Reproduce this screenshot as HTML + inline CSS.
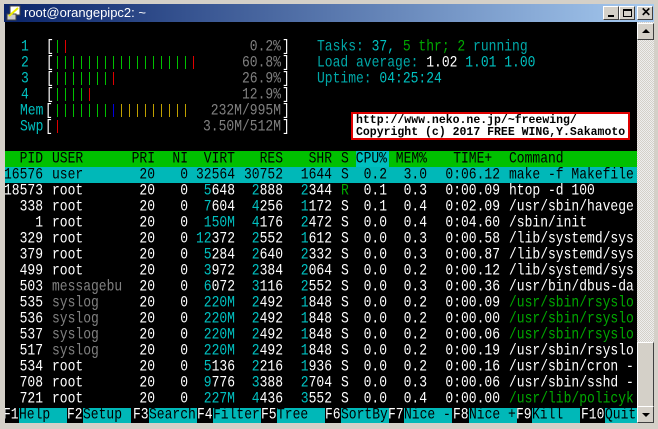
<!DOCTYPE html>
<html><head><meta charset="utf-8"><style>
*{margin:0;padding:0;box-sizing:border-box}
body{width:658px;height:429px;overflow:hidden;background:#d4d0c8;position:relative;font-family:"Liberation Mono",monospace}
#title{position:absolute;left:4px;top:4px;width:650px;height:18px;background:linear-gradient(to right,#0a246a,#a6caf0)}
#title .t{position:absolute;left:20px;top:1px;color:#fff;font:13px "Liberation Sans",sans-serif}
.tb{position:absolute;top:2px;width:16px;height:14px;background:#d4d0c8;border:1px solid;border-color:#fff #404040 #404040 #fff}
#term{position:absolute;left:5px;top:22px;width:632px;height:401px;background:#000;overflow:hidden}
.r{position:absolute;left:0;width:632px;height:16px}
.x{position:absolute;top:0;height:16px;line-height:16px;font-size:13px;white-space:pre;color:#fff;transform:scaleY(1.22);transform-origin:center}
.c{color:#00c0c0}.g{color:#00a800}.gr{color:#808080}.k{color:#000}.tl{color:#00a8a8}
.bar{position:absolute;width:1px;height:13px;top:1px}
.pct{left:180px;width:96px;text-align:right;color:#808080}
.pid{left:-5px;width:43px;text-align:right}.usr{left:47px}.pri{left:110px;width:40px;text-align:right}
.ni{left:155px;width:28px;text-align:right}.virt{left:185px;width:45px;text-align:right}
.res{left:235px;width:43px;text-align:right}.shr{left:285px;width:42px;text-align:right}
.s{left:336px}.cpu{left:345px;width:37px;text-align:right}.mem{left:385px;width:37px;text-align:right}
.time{left:425px;width:70px;text-align:right}.cmd{left:504px}
#sb{position:absolute;left:637px;top:22px;width:17px;height:401px;background-color:#eee;background-image:linear-gradient(45deg,#d4d0c8 25%,transparent 25%,transparent 75%,#d4d0c8 75%),linear-gradient(45deg,#d4d0c8 25%,transparent 25%,transparent 75%,#d4d0c8 75%);background-size:2px 2px;background-position:0 0,1px 1px}
.sbb{position:absolute;left:0;width:17px;height:17px;background:#d4d0c8;border:1px solid;border-color:#fff #404040 #404040 #fff}
#box{position:absolute;left:351px;top:112px;width:279px;height:28px;background:#fff;border:2px solid #e00000;font:bold 11.5px "Liberation Mono",monospace;color:#000;line-height:12px;padding:1px 0 0 3px;white-space:pre}
</style></head><body>
<div id="title">
<svg style="position:absolute;left:2px;top:1px" width="16" height="16" viewBox="0 0 16 16"><rect x="4" y="1" width="10" height="9" fill="#fff" stroke="#444"/><rect x="1" y="9" width="9" height="6" fill="#ccc" stroke="#444"/><path d="M3 11 L12 3" stroke="#ee0" stroke-width="2"/></svg>
<span class="t">root@orangepipc2: ~</span>
<div class="tb" style="left:599px"><div style="position:absolute;left:4px;top:8px;width:6px;height:2px;background:#000"></div></div>
<div class="tb" style="left:615px"><div style="position:absolute;left:3px;top:2px;width:9px;height:8px;border:1px solid #000;border-top-width:2px"></div></div>
<div class="tb" style="left:633px;width:16px"><span style="position:absolute;left:3px;top:-2px;font:bold 12px 'Liberation Sans',sans-serif">✕</span></div>
</div>
<div id="term">
<div class="r" style="top:17px"><span class="x c" style="left:16px">1</span><span class="x" style="left:41px">[</span><span class="x pct">0.2%</span><span class="x" style="left:277px">]</span></div>
<div class="r" style="top:33px"><span class="x c" style="left:16px">2</span><span class="x" style="left:41px">[</span><span class="x pct">60.8%</span><span class="x" style="left:277px">]</span></div>
<div class="r" style="top:49px"><span class="x c" style="left:16px">3</span><span class="x" style="left:41px">[</span><span class="x pct">26.9%</span><span class="x" style="left:277px">]</span></div>
<div class="r" style="top:65px"><span class="x c" style="left:16px">4</span><span class="x" style="left:41px">[</span><span class="x pct">12.9%</span><span class="x" style="left:277px">]</span></div>
<div class="r" style="top:81px"><span class="x c" style="left:15px">Mem</span><span class="x" style="left:40px">[</span><span class="x pct">232M/995M</span><span class="x" style="left:277px">]</span></div>
<div class="r" style="top:97px"><span class="x c" style="left:15px">Swp</span><span class="x" style="left:40px">[</span><span class="x pct">3.50M/512M</span><span class="x" style="left:277px">]</span></div>
<div id="bars"></div>
<div class="r" style="top:17px"><span class="x" style="left:312px"><span class="tl">Tasks: </span><span class="c">37, </span><span class="g">5 thr; 2 </span><span class="tl">running</span></span></div>
<div class="r" style="top:33px"><span class="x" style="left:312px"><span class="tl">Load average: </span><span>1.02 </span><span class="c">1.01 1.00</span></span></div>
<div class="r" style="top:49px"><span class="x" style="left:312px"><span class="tl">Uptime: </span><span class="c">04:25:24</span></span></div>
<div class="r" style="top:129px;background:#00c000"></div>
<div class="r" style="top:129px"><div style="position:absolute;left:351px;top:0;width:33px;height:16px;background:#00c0c0"></div><span class="x k pid">  PID</span><span class="x k usr">USER</span><span class="x k pri">PRI</span><span class="x k ni">NI</span><span class="x k virt">VIRT</span><span class="x k res">RES</span><span class="x k shr">SHR</span><span class="x k s">S</span><span class="x k cpu">CPU%</span><span class="x k mem">MEM%</span><span class="x k time">TIME+ </span><span class="x k cmd">Command</span></div>
<div class="r" style="top:145px;background:#00b8b8"></div>
<div id="rows"></div>
<div id="foot"></div>
</div>
<div id="box">http://www.neko.ne.jp/~freewing/
Copyright (c) 2017 FREE WING,Y.Sakamoto</div>
<div id="sb">
<div class="sbb" style="top:1px"><div style="position:absolute;left:4px;top:5px;width:0;height:0;border-left:4px solid transparent;border-right:4px solid transparent;border-bottom:4px solid #000"></div></div>
<div class="sbb" style="top:320px;height:65px"></div>
<div class="sbb" style="top:384px"><div style="position:absolute;left:4px;top:6px;width:0;height:0;border-left:4px solid transparent;border-right:4px solid transparent;border-top:4px solid #000"></div></div>
</div>
<script>
var B=document.getElementById('bars'),h='';
function bar(row,col,c){h+='<div class="bar" style="left:'+(52+(col-6)*8)+'px;top:'+(18+16*(row-1))+'px;background:'+c+'"></div>';}
var G='#00c000',R='#e00000',Bl='#0000e0',Y='#c0a000';
bar(1,6,G);bar(1,7,R);
for(var i=6;i<=22;i++)bar(2,i,G);bar(2,23,R);
for(i=6;i<=12;i++)bar(3,i,G);bar(3,13,R);
for(i=6;i<=9;i++)bar(4,i,G);bar(4,10,R);
for(i=6;i<=12;i++)bar(5,i,G);bar(5,13,Bl);for(i=14;i<=22;i++)bar(5,i,Y);
bar(6,6,R);
B.innerHTML=h;
var D=[
['16576','user','32564','30752','1644','S','0.2','3.0','0:06.12','make -f Makefile',1],
['18573','root','<span class=c>5</span>648','<span class=c>2</span>888','<span class=c>2</span>344','<span class=g>R</span>','0.1','0.3','0:00.09','htop -d 100'],
['338','root','<span class=c>7</span>604','<span class=c>4</span>256','<span class=c>1</span>172','S','0.1','0.4','0:02.09','/usr/sbin/havege'],
['1','root','<span class=c>150M</span>','<span class=c>4</span>176','<span class=c>2</span>472','S','0.0','0.4','0:04.60','/sbin/init'],
['329','root','<span class=c>12</span>372','<span class=c>2</span>552','<span class=c>1</span>612','S','0.0','0.3','0:00.58','/lib/systemd/sys'],
['379','root','<span class=c>5</span>284','<span class=c>2</span>640','<span class=c>2</span>332','S','0.0','0.3','0:00.87','/lib/systemd/sys'],
['499','root','<span class=c>3</span>972','<span class=c>2</span>384','<span class=c>2</span>064','S','0.0','0.2','0:00.12','/lib/systemd/sys'],
['503','<span class=gr>messagebu</span>','<span class=c>6</span>072','<span class=c>3</span>116','<span class=c>2</span>552','S','0.0','0.3','0:00.36','/usr/bin/dbus-da'],
['535','<span class=gr>syslog</span>','<span class=c>220M</span>','<span class=c>2</span>492','<span class=c>1</span>848','S','0.0','0.2','0:00.09','<span class=g>/usr/sbin/rsyslo</span>'],
['536','<span class=gr>syslog</span>','<span class=c>220M</span>','<span class=c>2</span>492','<span class=c>1</span>848','S','0.0','0.2','0:00.00','<span class=g>/usr/sbin/rsyslo</span>'],
['537','<span class=gr>syslog</span>','<span class=c>220M</span>','<span class=c>2</span>492','<span class=c>1</span>848','S','0.0','0.2','0:00.06','<span class=g>/usr/sbin/rsyslo</span>'],
['517','<span class=gr>syslog</span>','<span class=c>220M</span>','<span class=c>2</span>492','<span class=c>1</span>848','S','0.0','0.2','0:00.19','/usr/sbin/rsyslo'],
['534','root','<span class=c>5</span>136','<span class=c>2</span>216','<span class=c>1</span>936','S','0.0','0.2','0:00.16','/usr/sbin/cron -'],
['708','root','<span class=c>9</span>776','<span class=c>3</span>388','<span class=c>2</span>704','S','0.0','0.3','0:00.06','/usr/sbin/sshd -'],
['721','root','<span class=c>227M</span>','<span class=c>4</span>436','<span class=c>3</span>552','S','0.0','0.4','0:00.00','<span class=g>/usr/lib/policyk</span>']];
h='';
D.forEach(function(d,j){var k=d[10]?' k':'';
h+='<div class="r" style="top:'+(145+16*j)+'px"><span class="x pid'+k+'">'+d[0]+'</span><span class="x usr'+k+'">'+d[1]+'</span><span class="x pri'+k+'">20</span><span class="x ni'+k+'">0</span><span class="x virt'+k+'">'+d[2]+'</span><span class="x res'+k+'">'+d[3]+'</span><span class="x shr'+k+'">'+d[4]+'</span><span class="x s'+k+'">'+d[5]+'</span><span class="x cpu'+k+'">'+d[6]+'</span><span class="x mem'+k+'">'+d[7]+'</span><span class="x time'+k+'">'+d[8]+'</span><span class="x cmd'+k+'">'+d[9]+'</span></div>';});
document.getElementById('rows').innerHTML=h;
var F=[['F1','Help  ',-2],['F2','Setup ',62],['F3','Search',128],['F4','Filter',192],['F5','Tree  ',256],['F6','SortBy',320],['F7','Nice -',383],['F8','Nice +',448],['F9','Kill  ',511],['F10','Quit ',576]];
h='<div class="r" style="top:385px">';
F.forEach(function(f){var w=f[0].length*8;h+='<span class="x" style="left:'+f[2]+'px">'+f[0]+'</span><div style="position:absolute;top:1px;height:15px;left:'+(f[2]+w)+'px;width:'+(f[1].length*8)+'px;background:#00b8b8"></div><span class="x k" style="left:'+(f[2]+w)+'px">'+f[1]+'</span>';});
h+='</div>';
document.getElementById('foot').innerHTML=h;
</script>
</body></html>
